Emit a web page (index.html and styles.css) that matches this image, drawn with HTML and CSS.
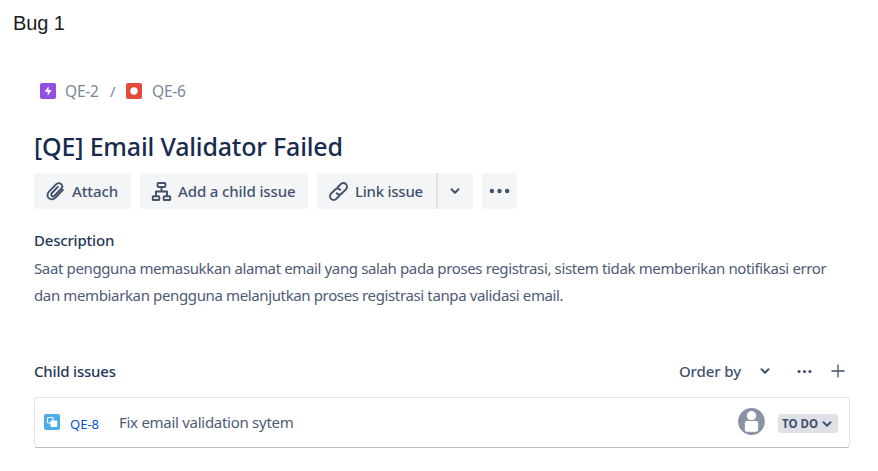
FILE: index.html
```html
<!DOCTYPE html>
<html lang="id">
<head>
<meta charset="utf-8">
<title>Bug 1</title>
<link rel="stylesheet" href="styles.css">
</head>
<body>
<h2 class="caption">Bug 1</h2>
<main class="issue">
  <nav class="crumbs">
    <svg class="type-icon" viewBox="0 0 16 16"><rect width="16" height="16" rx="2" fill="#904ee2"/><path d="M8.6 3.2 4.5 8.8h3.2v4l4-5.7H8.6z" fill="#fff"/></svg>
    <span class="crumb">QE-2</span>
    <span class="slash">/</span>
    <svg class="type-icon" viewBox="0 0 16 16"><rect width="16" height="16" rx="2" fill="#e5493a"/><circle cx="8" cy="8" r="3.7" fill="#fff"/></svg>
    <span class="crumb">QE-6</span>
  </nav>
  <h1 class="title">[QE] Email Validator Failed</h1>
  <div class="actions">
    <button class="btn attach">
      <svg class="icon" viewBox="0 0 24 24"><path d="M20.5 10.2 12.3 18.8C10 21.2 6.500 21.800 4.300 19.600C2.100 17.400 2.500 14.200 4.800 11.900L12.600 3.900C14.300 2.200 16.900 1.900 18.500 3.500C20.100 5.100 19.900 7.500 18.200 9.200L10.900 16.700C9.900 17.700 8.600 17.800 7.700 16.900C6.800 16 6.900 14.700 7.900 13.700L14.700 6.700"/></svg>
      <span>Attach</span>
    </button>
    <button class="btn child">
      <svg class="icon" viewBox="0 0 24 24"><rect x="7.500" y="2.200" width="9" height="4.600" rx="1"/><rect x="2" y="17.400" width="7.500" height="4.400" rx="1"/><rect x="14.500" y="17.400" width="7.500" height="4.400" rx="1"/><path d="M12 7v5M5.700 17v-5h12.600v5"/></svg>
      <span>Add a child issue</span>
    </button>
    <div class="split">
      <button class="btn link">
        <svg class="icon" viewBox="0 0 24 24"><path d="M11 7.200 14.600 3.600a4 4 0 0 1 5.900 5.900L16 14a4 4 0 0 1-6 0M13 16.800 9.400 20.400a4 4 0 0 1-5.900-5.900L8 10a4 4 0 0 1 6 0"/></svg>
        <span>Link issue</span>
      </button>
      <button class="btn drop" aria-label="Link options"><svg class="chevron" viewBox="0 0 10 10"><path d="M1.500 3.200 5 6.700 8.500 3.200"/></svg></button>
    </div>
    <button class="btn more" aria-label="More"><svg class="dots" viewBox="0 0 22 6"><circle cx="3" cy="3" r="2.300"/><circle cx="11" cy="3" r="2.300"/><circle cx="19" cy="3" r="2.300"/></svg></button>
  </div>
  <h3 class="heading"><span class="desc-label">Description</span></h3>
  <p class="text">Saat pengguna memasukkan alamat email yang salah pada proses registrasi, sistem tidak memberikan notifikasi error<br>dan membiarkan pengguna melanjutkan proses registrasi tanpa validasi email.</p>
  <div class="child-head">
    <h3 class="heading child-label">Child issues</h3>
    <span class="order">Order by</span>
    <svg class="chevron order-chevron" viewBox="0 0 10 10"><path d="M1.500 3.200 5 6.700 8.500 3.200"/></svg>
    <svg class="dots small" viewBox="0 0 22 6"><circle cx="3" cy="3" r="2.300"/><circle cx="11" cy="3" r="2.300"/><circle cx="19" cy="3" r="2.300"/></svg>
    <svg class="plus" viewBox="0 0 14 14"><path d="M7 .5v13M.5 7h13"/></svg>
  </div>
  <div class="row">
    <svg class="type-icon" viewBox="0 0 16 16"><rect width="16" height="16" rx="2" fill="#4bade8"/><rect x="3.500" y="3.500" width="5.500" height="5.500" rx=".7" fill="none" stroke="#fff" stroke-width="1.100"/><rect x="6.500" y="6.500" width="6.700" height="6.500" rx="1" fill="#fff"/></svg>
    <a class="key">QE-8</a>
    <span class="summary">Fix email validation sytem</span>
    <svg class="avatar" viewBox="0 0 27 27"><circle cx="13.500" cy="13.500" r="13.400" fill="#8993a4"/><circle cx="13.500" cy="7.800" r="4.700" fill="#fff"/><path d="M6.300 15.300q0-2.800 2.800-2.800h8.800q2.800 0 2.800 2.800v6.200q0 2.800-2.800 2.800h-8.800q-2.800 0-2.800-2.800z" fill="#fff" stroke="#8993a4"/></svg>
    <span class="status"><span>TO DO</span><svg class="chevron" viewBox="0 0 10 10"><path d="M1.500 3.200 5 6.700 8.500 3.200"/></svg></span>
  </div>
</main>
</body>
</html>
```
FILE: styles.css
```css
* { box-sizing: border-box; }
body { margin: 0; background: #fff; color: #42526e; font: 15px/20px "Noto Sans", "Open Sans", sans-serif; overflow: hidden; }
h1, h2, h3, p { margin: 0; }
svg { display: block; flex: none; }
span, a { white-space: nowrap; }
.caption { padding: 11px 0 0 13px; height: 78px; font: 400 20px/24px "Liberation Sans", Arial, sans-serif; letter-spacing: -.1px; color: #1c1c1c; }
.issue { width: 816px; margin-left: 34px; }
.crumbs { display: flex; align-items: center; height: 25px; padding-left: 6px; color: #7a869a; }
.type-icon { width: 16px; height: 16px; }
.crumb { margin-left: 9px; width: 35px; font-size: 15.5px; letter-spacing: -.2px; }
.crumb:last-child { margin-left: 10px; }
.slash { width: 8px; margin: 0 8px 0 10px; }
.title { height: 70px; padding-top: 25px; font-size: 25px; line-height: 36px; font-weight: 500; color: #172b4d; letter-spacing: -.18px; white-space: nowrap; }
.actions { display: flex; height: 36px; }
.btn { display: flex; align-items: center; height: 36px; padding: 0 0 0 11px; border: 0; border-radius: 3px; background: #f4f5f7; color: #42526e; font: 500 15px/20px "Noto Sans", sans-serif; letter-spacing: -.12px; }
.icon { width: 21px; height: 21px; margin-right: 6px; fill: none; stroke: #42526e; stroke-width: 2.2; stroke-linecap: round; stroke-linejoin: round; }
.attach { width: 97px; }
.child { width: 168px; margin-left: 9px; }
.split { display: flex; margin-left: 9px; }
.link { width: 119px; border-radius: 3px 0 0 3px; letter-spacing: -.25px; }
.drop { width: 37px; padding-left: 12px; border-left: 2px solid #dfe1e6; border-radius: 0 3px 3px 0; }
.more { width: 35px; margin-left: 9px; padding-left: 7px; }
.chevron { width: 10px; height: 10px; fill: none; stroke: #42526e; stroke-width: 2; stroke-linecap: round; stroke-linejoin: round; }
.dots { width: 21px; height: 6px; fill: #42526e; }
.heading { font-size: 15px; line-height: 20px; font-weight: 500; letter-spacing: -.2px; color: #253858; }
.desc-label { display: block; margin-top: 21px; }
.text { margin-top: 5px; height: 97px; line-height: 26.500px; letter-spacing: -.37px; white-space: nowrap; color: #4c5b76; }
.child-head { display: flex; align-items: center; height: 36px; margin-top: 1px; font-weight: 500; }
.order { margin-left: auto; letter-spacing: -.1px; }
.order-chevron { margin-left: 19px; }
.small { width: 15px; height: 5px; margin-left: 27px; }
.plus { width: 14px; height: 14px; margin: 0 5px 0 19px; fill: none; stroke: #42526e; stroke-width: 1.300; }
.row { display: flex; align-items: center; height: 51px; margin-top: 8px; padding: 0 11px 0 9px; border: 1px solid #e3e5ea; border-bottom-color: #b6bdcb; border-radius: 3px; }
.row > * { position: relative; top: -1px; }
.key { margin: 4px 0 0 10px; color: #0052cc; font-size: 13px; }
.summary { margin-left: 20px; letter-spacing: -.28px; color: #4c5b76; }
.avatar { width: 27px; height: 27px; margin-left: auto; }
.status { display: flex; align-items: center; width: 60px; height: 19px; margin: 4px 0 0 13px; padding-left: 4px; border-radius: 3px; background: #dfe1e6; font-size: 11.500px; font-weight: 700; }
.status .chevron { margin-left: 4px; }
```
